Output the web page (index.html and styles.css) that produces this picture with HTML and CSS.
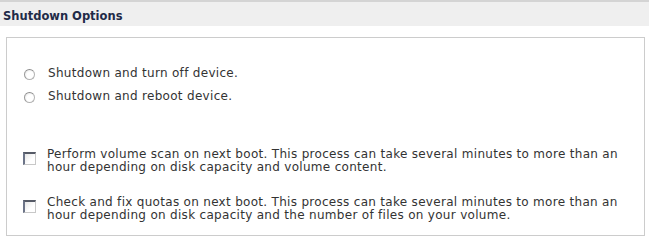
FILE: index.html
```html
<!DOCTYPE html>
<html lang="en">

<head>
    <meta charset="utf-8">
    <title>Shutdown Options</title>
    <link rel="stylesheet" href="styles.css">
</head>

<body>
    <h2 class="section-title">Shutdown Options</h2>

    <div class="panel">
        <div class="group group--radios">
            <label class="option">
                <input class="radio" type="radio" name="shutdown">
                <span class="option__text">Shutdown and turn off device.</span>
            </label>
            <label class="option">
                <input class="radio" type="radio" name="shutdown">
                <span class="option__text">Shutdown and reboot device.</span>
            </label>
        </div>

        <div class="group group--checks">
            <label class="option">
                <input class="check" type="checkbox">
                <span class="option__text">Perform volume scan on next boot. This process can take several minutes to more than an hour depending on disk capacity and volume content.</span>
            </label>
            <label class="option">
                <input class="check" type="checkbox">
                <span class="option__text">Check and fix quotas on next boot. This process can take several minutes to more than an hour depending on disk capacity and the number of files on your volume.</span>
            </label>
        </div>
    </div>
</body>

</html>
```

FILE: styles.css
```css
html {
    box-sizing: border-box;
}

*,
*:before,
*:after {
    box-sizing: inherit;
}

body {
    margin: 0;
    font-family: "DejaVu Sans", Verdana, sans-serif;
    font-size: 12px;
    letter-spacing: 0.3px;
    color: #333333;
    background: #fff;
}

.section-title {
    margin: 0;
    height: 26px;
    padding: 7px 0 0 3px;
    border-top: 2px solid #d4d4d4;
    background: #efefef;
    color: #1f2b48;
    font-size: 11.5px;
    font-weight: bold;
    letter-spacing: 0;
    line-height: 14px;
}

.panel {
    margin: 11px 4px 0 6px;
    height: 199px;
    border: 1px solid #cccccc;
    padding: 29px 12px 0 16px;
}

.group {
    display: flex;
    flex-direction: column;
}

.group--radios {
    gap: 10px;
}

.group--checks {
    margin-top: 45px;
    gap: 22px;
}

.option {
    display: flex;
    align-items: flex-start;
    line-height: 13px;
}

.option__text {
    max-width: 590px;
}

.radio,
.check {
    appearance: none;
    -webkit-appearance: none;
    flex: none;
    margin: 0;
}

.radio {
    width: 11px;
    height: 11px;
    margin: 2px 13px 0 1px;
    border-radius: 50%;
    border: 1px solid #b2b2b2;
    border-top-color: #8c8c8c;
    border-left-color: #9a9a9a;
    background: radial-gradient(circle at 60% 60%, #ffffff 45%, #ececec 75%, #d8d8d8 100%);
}

.check {
    width: 13px;
    height: 13px;
    margin: 4px 11px 0 0;
    border: 1px solid #c8c8c8;
    border-top: 2px solid #555a66;
    border-left: 2px solid #6c7488;
    background: linear-gradient(135deg, #e6e6e6, #ffffff 60%);
}
```
